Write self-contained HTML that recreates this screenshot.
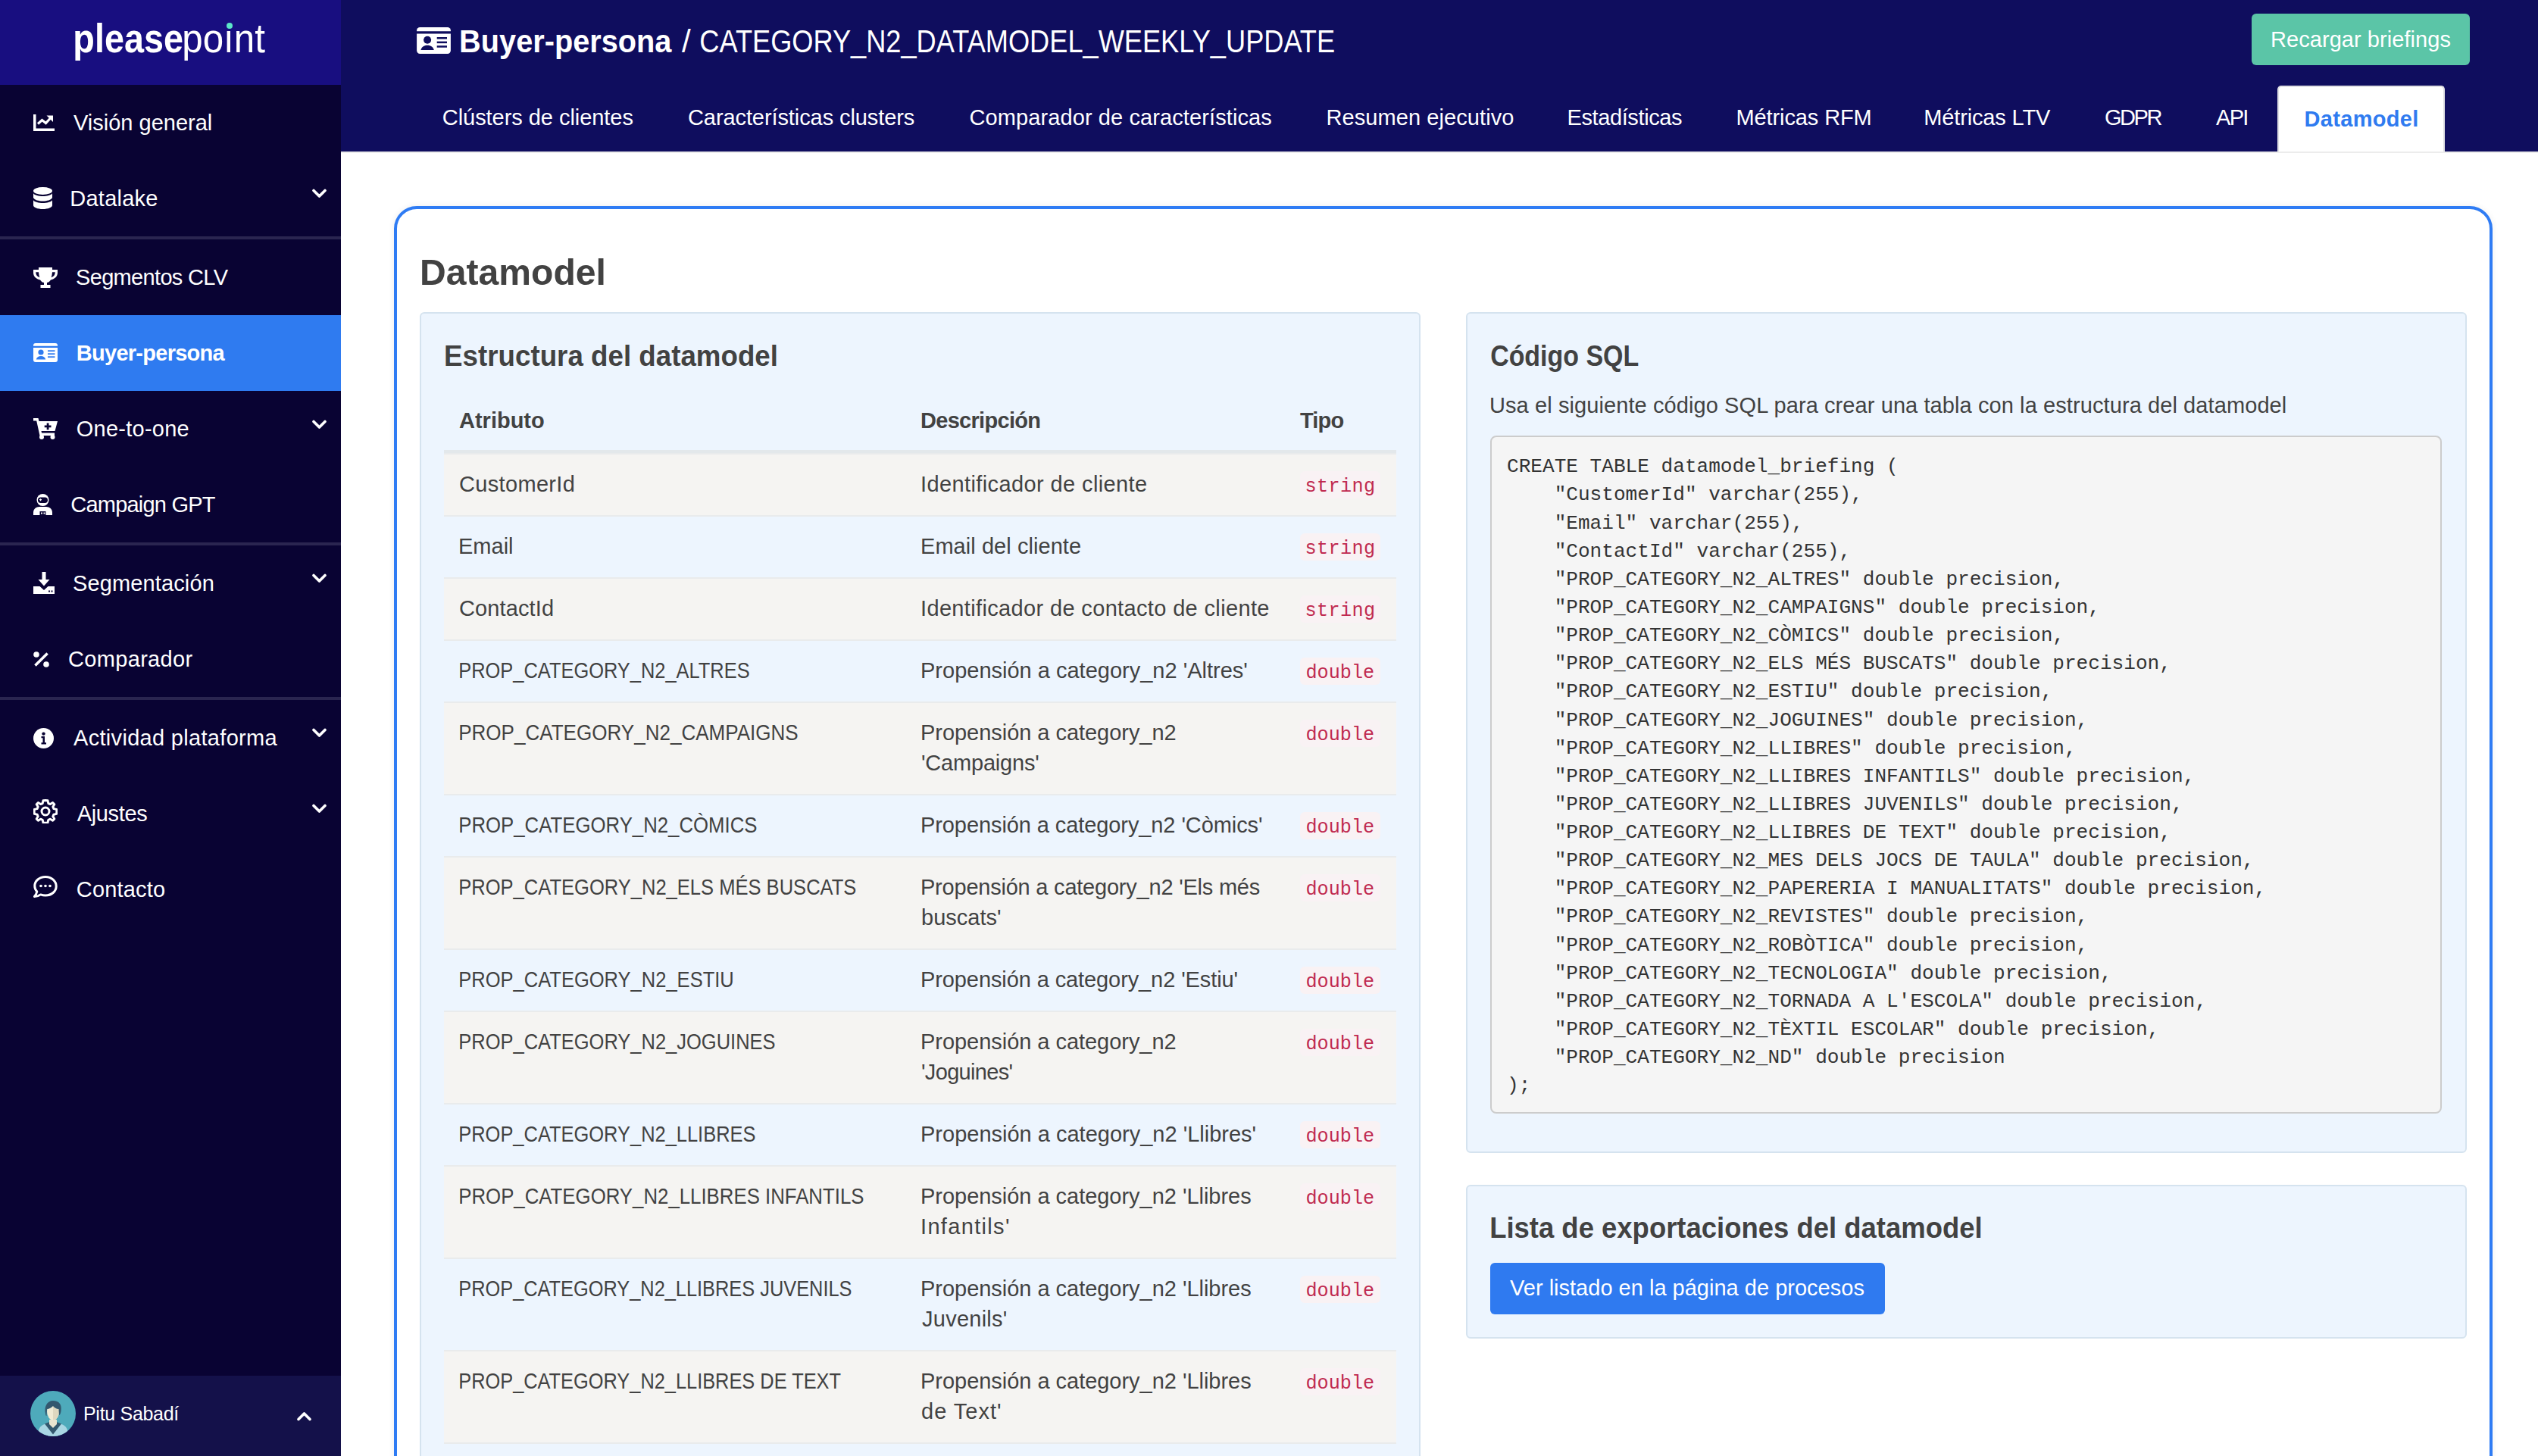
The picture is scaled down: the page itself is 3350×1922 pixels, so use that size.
<!DOCTYPE html>
<html><head><meta charset="utf-8"><title>Datamodel</title>
<style>
html,body{margin:0;padding:0;}
body{width:3350px;height:1922px;overflow:hidden;position:relative;background:#fff;font-family:"Liberation Sans", sans-serif;}
.t{position:absolute;white-space:nowrap;}
.r{position:absolute;box-sizing:content-box;}
</style></head><body>
<div class="r" style="left:0px;top:0px;width:450px;height:1922px;background:#090333;"></div>
<div class="r" style="left:0px;top:0px;width:450px;height:112px;background:#180e80;"></div>
<div class="t" style="left:96.0px;top:21px;font-size:53px;line-height:59px;font-weight:700;color:#fff;font-family:'Liberation Sans', sans-serif;transform:scaleX(0.8820);transform-origin:3.0px 0;">please</div>
<div class="t" style="left:240.0px;top:21px;font-size:53px;line-height:59px;font-weight:400;color:#fff;font-family:'Liberation Sans', sans-serif;transform:scaleX(0.9304);transform-origin:3.0px 0;">poınt</div>
<div class="r" style="left:299px;top:30px;width:8px;height:8px;border-radius:50%;background:#5ce6c8"></div>
<div class="r" style="left:0px;top:312px;width:450px;height:4px;background:#2a2550;"></div>
<div class="r" style="left:0px;top:716px;width:450px;height:4px;background:#2a2550;"></div>
<div class="r" style="left:0px;top:920px;width:450px;height:4px;background:#2a2550;"></div>
<div class="r" style="left:0px;top:416px;width:450px;height:100px;background:#2f7bf0;"></div>
<div class="r" style="left:44px;top:151px;line-height:0"><svg width="28" height="22" viewBox="0 0 28 22"><path d="M0 0h3.5v18.5H28V22H0z" fill="#fff"/><path d="M6 12.5l5.5-5 5 4 6-6.5" stroke="#fff" stroke-width="3.2" fill="none" stroke-linejoin="miter"/><path d="M17.5 1.5H26v8.5z" fill="#fff"/></svg></div>
<div class="t" style="left:97.0px;top:146px;font-size:29px;line-height:32px;font-weight:400;color:#fff;font-family:'Liberation Sans', sans-serif;">Visión general</div>
<div class="r" style="left:44px;top:247px;line-height:0"><svg width="25" height="29" viewBox="0 0 25 29"><ellipse cx="12.5" cy="5" rx="12.5" ry="5" fill="#fff"/><path d="M0 8.2c2 2.6 7 3.8 12.5 3.8S23 10.8 25 8.2V14c-1.5 3-7 4.5-12.5 4.5S1.5 17 0 14z" fill="#fff"/><path d="M0 17.2c2 2.6 7 3.8 12.5 3.8S23 19.8 25 17.2V24c0 2.8-5.6 5-12.5 5S0 26.8 0 24z" fill="#fff"/></svg></div>
<div class="t" style="left:92.3px;top:246px;font-size:29px;line-height:32px;font-weight:400;color:#fff;font-family:'Liberation Sans', sans-serif;letter-spacing:0.24px;">Datalake</div>
<div class="r" style="left:412px;top:249px;line-height:0"><svg width="19" height="13" viewBox="0 0 19 13"><path d="M2 2.5l7.5 7.5 7.5-7.5" stroke="#fff" stroke-width="3.6" fill="none" stroke-linecap="round" stroke-linejoin="round"/></svg></div>
<div class="r" style="left:44px;top:353px;line-height:0"><svg width="32" height="27" viewBox="0 0 32 27"><path d="M7 0h18v3h7v4c0 5-4 8.5-9 9.5-1.2 2-3 3.2-5 3.6V23h4.5v4h-13v-4H14v-2.9c-2-.4-3.8-1.6-5-3.6C4 15.5 0 12 0 7V3h7zM3.3 6.3v.8c0 3 2.2 5.3 5.1 6.2C7.6 11.3 7.2 8.8 7 6.3zm25.4 0h-3.7c-.2 2.5-.6 5-1.4 7 2.9-.9 5.1-3.2 5.1-6.2z" fill="#fff"/></svg></div>
<div class="t" style="left:100.0px;top:350px;font-size:29px;line-height:32px;font-weight:400;color:#fff;font-family:'Liberation Sans', sans-serif;letter-spacing:-0.67px;">Segmentos CLV</div>
<div class="r" style="left:44px;top:453px;line-height:0"><svg width="32" height="25" viewBox="0 0 32 25"><path d="M3 0h26a3 3 0 0 1 3 3v.8H0V3a3 3 0 0 1 3-3z" fill="#fff"/><path d="M0 6h32v16a3 3 0 0 1-3 3H3a3 3 0 0 1-3-3z" fill="#fff"/><circle cx="10" cy="12" r="3.6" fill="#2f7bf0"/><path d="M3.8 21.5c.6-2.8 3-4.5 6.2-4.5s5.6 1.7 6.2 4.5z" fill="#2f7bf0"/><rect x="19" y="9.3" width="9.5" height="1.8" fill="#2f7bf0"/><rect x="19" y="13.3" width="9.5" height="1.8" fill="#2f7bf0"/><rect x="19" y="17.3" width="9.5" height="1.8" fill="#2f7bf0"/></svg></div>
<div class="t" style="left:100.8px;top:450px;font-size:29px;line-height:32px;font-weight:700;color:#fff;font-family:'Liberation Sans', sans-serif;letter-spacing:-0.73px;">Buyer-persona</div>
<div class="r" style="left:44px;top:552px;line-height:0"><svg width="32" height="28" viewBox="0 0 32 28"><path d="M0 0h6.5l1 4H32l-3.5 13H10.5l.6 2.5H28V23H8.5L4.2 3.5H0z" fill="#fff"/><circle cx="11" cy="25" r="3" fill="#fff"/><circle cx="25.5" cy="25" r="3" fill="#fff"/><path d="M17.7 6.5h2.8v3h3v2.8h-3v3h-2.8v-3h-3V9.5h3z" fill="#090333"/></svg></div>
<div class="t" style="left:100.8px;top:550px;font-size:29px;line-height:32px;font-weight:400;color:#fff;font-family:'Liberation Sans', sans-serif;letter-spacing:0.24px;">One-to-one</div>
<div class="r" style="left:412px;top:554px;line-height:0"><svg width="19" height="13" viewBox="0 0 19 13"><path d="M2 2.5l7.5 7.5 7.5-7.5" stroke="#fff" stroke-width="3.6" fill="none" stroke-linecap="round" stroke-linejoin="round"/></svg></div>
<div class="r" style="left:44px;top:652px;line-height:0"><svg width="25" height="28" viewBox="0 0 25 28"><circle cx="12.5" cy="8" r="8" fill="#fff"/><rect x="6" y="4.5" width="13" height="7.5" rx="3.7" fill="#090333"/><path d="M9.5 6.2v3M8 7.7h3" stroke="#fff" stroke-width="1.2"/><path d="M0 28v-3.5C0 20 3.5 17 8 17h9c4.5 0 8 3 8 7.5V28z" fill="#fff"/><rect x="8.5" y="23" width="8" height="5" fill="#090333"/><rect x="10" y="24.5" width="2" height="2" fill="#fff"/><rect x="13.5" y="24.5" width="2" height="2" fill="#fff"/></svg></div>
<div class="t" style="left:93.3px;top:650px;font-size:29px;line-height:32px;font-weight:400;color:#fff;font-family:'Liberation Sans', sans-serif;letter-spacing:-0.79px;">Campaign GPT</div>
<div class="r" style="left:44px;top:755px;line-height:0"><svg width="28" height="29" viewBox="0 0 28 29"><path d="M11.5 0h5v10h5L14 18.5 6.5 10h5z" fill="#fff"/><path d="M0 19h8.5l5.5 5 5.5-5H28v10H0z" fill="#fff"/><rect x="20" y="24.5" width="2" height="2" fill="#090333"/><rect x="23.5" y="24.5" width="2" height="2" fill="#090333"/></svg></div>
<div class="t" style="left:96.0px;top:754px;font-size:29px;line-height:32px;font-weight:400;color:#fff;font-family:'Liberation Sans', sans-serif;letter-spacing:0.13px;">Segmentación</div>
<div class="r" style="left:412px;top:757px;line-height:0"><svg width="19" height="13" viewBox="0 0 19 13"><path d="M2 2.5l7.5 7.5 7.5-7.5" stroke="#fff" stroke-width="3.6" fill="none" stroke-linecap="round" stroke-linejoin="round"/></svg></div>
<div class="r" style="left:44px;top:860px;line-height:0"><svg width="21" height="21" viewBox="0 0 21 21"><circle cx="4" cy="4" r="3.8" fill="#fff"/><circle cx="17" cy="17" r="3.8" fill="#fff"/><path d="M1.2 17.3L17.3 1.2l2.5 2.5L3.7 19.8z" fill="#fff"/></svg></div>
<div class="t" style="left:90.0px;top:854px;font-size:29px;line-height:32px;font-weight:400;color:#fff;font-family:'Liberation Sans', sans-serif;letter-spacing:0.33px;">Comparador</div>
<div class="r" style="left:44px;top:961px;line-height:0"><svg width="27" height="27" viewBox="0 0 27 27"><circle cx="13.5" cy="13.5" r="13.5" fill="#fff"/><circle cx="13.5" cy="7.6" r="2.2" fill="#090333"/><path d="M10.5 11h4.5v8.3h2v2.2h-6.5v-2.2h2v-6h-2z" fill="#090333"/></svg></div>
<div class="t" style="left:97.0px;top:958px;font-size:29px;line-height:32px;font-weight:400;color:#fff;font-family:'Liberation Sans', sans-serif;letter-spacing:0.31px;">Actividad plataforma</div>
<div class="r" style="left:412px;top:961px;line-height:0"><svg width="19" height="13" viewBox="0 0 19 13"><path d="M2 2.5l7.5 7.5 7.5-7.5" stroke="#fff" stroke-width="3.6" fill="none" stroke-linecap="round" stroke-linejoin="round"/></svg></div>
<div class="r" style="left:44px;top:1055px;line-height:0"><svg width="32" height="32" viewBox="0 0 32 32"><path d="M16 1.5l3 .3.8 3.7 2.6 1.1 3.2-2 2.2 2.2-2 3.2 1.1 2.6 3.7.8.3 3-.3 3-3.7.8-1.1 2.6 2 3.2-2.2 2.2-3.2-2-2.6 1.1-.8 3.7-3 .3-3-.3-.8-3.7-2.6-1.1-3.2 2-2.2-2.2 2-3.2-1.1-2.6-3.7-.8-.3-3 .3-3 3.7-.8 1.1-2.6-2-3.2 2.2-2.2 3.2 2 2.6-1.1.8-3.7z" fill="none" stroke="#fff" stroke-width="3" stroke-linejoin="round"/><circle cx="16" cy="16" r="5" fill="none" stroke="#fff" stroke-width="3"/></svg></div>
<div class="t" style="left:101.8px;top:1058px;font-size:29px;line-height:32px;font-weight:400;color:#fff;font-family:'Liberation Sans', sans-serif;letter-spacing:-0.37px;">Ajustes</div>
<div class="r" style="left:412px;top:1061px;line-height:0"><svg width="19" height="13" viewBox="0 0 19 13"><path d="M2 2.5l7.5 7.5 7.5-7.5" stroke="#fff" stroke-width="3.6" fill="none" stroke-linecap="round" stroke-linejoin="round"/></svg></div>
<div class="r" style="left:44px;top:1155px;line-height:0"><svg width="32" height="32" viewBox="0 0 32 32"><path d="M16 2.5C8 2.5 1.8 7.8 1.8 14.5c0 2.8 1.1 5.4 3 7.5-.6 2.5-2 4.8-3.3 6.5 3.3 0 6.2-1.2 8.1-2.6 2 .7 4.2 1.1 6.4 1.1 8 0 14.2-5.3 14.2-12S24 2.5 16 2.5z" fill="none" stroke="#fff" stroke-width="3" stroke-linejoin="round"/><circle cx="10" cy="14.5" r="1.8" fill="#fff"/><circle cx="16" cy="14.5" r="1.8" fill="#fff"/><circle cx="22" cy="14.5" r="1.8" fill="#fff"/></svg></div>
<div class="t" style="left:100.8px;top:1158px;font-size:29px;line-height:32px;font-weight:400;color:#fff;font-family:'Liberation Sans', sans-serif;letter-spacing:0.17px;">Contacto</div>
<div class="r" style="left:0px;top:1816px;width:450px;height:106px;background:#14114a;"></div>
<div class="r" style="left:40px;top:1836px;line-height:0"><svg width="60" height="60" viewBox="0 0 60 60"><defs><clipPath id="cc"><circle cx="30" cy="30" r="30"/></clipPath></defs><circle cx="30" cy="30" r="30" fill="#4eaabb"/><g clip-path="url(#cc)"><path d="M10 60c0-10 3-14 9-16l11-3 11 3c6 2 9 6 9 16z" fill="#a9d6e3"/><path d="M19 43.5l11 14 11-14-5-2H24z" fill="#33586e"/><path d="M25 38h10v6l-5 5-5-5z" fill="#e9e4cf"/><ellipse cx="30" cy="27" rx="8" ry="11.5" fill="#efebd5"/><path d="M30 15.5c4.5 0 8 4 8 11.5s-3.5 11.5-8 11.5z" fill="#ddd8c0"/><path d="M20 30c-2-9 2-17 10-17s12 5 10.5 14c-.5 3-1.5 5-2.5 5l-.5-8c-3 0-6-2-7.5-4-2 2-5 4-8 4l-.5 9c-1 0-1.3-1-1.5-3z" fill="#33586e"/></g></svg></div>
<div class="t" style="left:110.0px;top:1852px;font-size:25px;line-height:28px;font-weight:400;color:#fff;font-family:'Liberation Sans', sans-serif;letter-spacing:-0.30px;">Pitu Sabadí</div>
<div class="r" style="left:392px;top:1863px;line-height:0"><svg width="19" height="13" viewBox="0 0 19 13"><path d="M2 10.5l7.5-7.5 7.5 7.5" stroke="#fff" stroke-width="3.6" fill="none" stroke-linecap="round" stroke-linejoin="round"/></svg></div>
<div class="r" style="left:450px;top:0px;width:2900px;height:200px;background:#0f0d5e;"></div>
<div class="r" style="left:550px;top:36px;line-height:0"><svg width="45" height="35" viewBox="0 0 32 25"><path d="M3 0h26a3 3 0 0 1 3 3v.8H0V3a3 3 0 0 1 3-3z" fill="#fff"/><path d="M0 6h32v16a3 3 0 0 1-3 3H3a3 3 0 0 1-3-3z" fill="#fff"/><circle cx="10" cy="12" r="3.6" fill="#0f0d5e"/><path d="M3.8 21.5c.6-2.8 3-4.5 6.2-4.5s5.6 1.7 6.2 4.5z" fill="#0f0d5e"/><rect x="19" y="9.3" width="9.5" height="1.8" fill="#0f0d5e"/><rect x="19" y="13.3" width="9.5" height="1.8" fill="#0f0d5e"/><rect x="19" y="17.3" width="9.5" height="1.8" fill="#0f0d5e"/></svg></div>
<div class="t" style="left:606.0px;top:31px;font-size:42px;line-height:47px;font-weight:700;color:#fff;font-family:'Liberation Sans', sans-serif;transform:scaleX(0.9458);transform-origin:2.0px 0;">Buyer-persona</div>
<div class="t" style="left:900.0px;top:31px;font-size:42px;line-height:47px;font-weight:400;color:#fff;font-family:'Liberation Sans', sans-serif;">/</div>
<div class="t" style="left:923.0px;top:31px;font-size:42px;line-height:47px;font-weight:400;color:#fff;font-family:'Liberation Sans', sans-serif;transform:scaleX(0.8619);transform-origin:2.0px 0;">CATEGORY_N2_DATAMODEL_WEEKLY_UPDATE</div>
<div class="r" style="left:2972px;top:18px;width:288px;height:68px;background:#5bc5a7;border-radius:6px"></div>
<div class="t" style="left:2997.0px;top:36px;font-size:29px;line-height:32px;font-weight:400;color:#fff;font-family:'Liberation Sans', sans-serif;letter-spacing:0.06px;">Recargar briefings</div>
<div class="t" style="left:583.8px;top:139px;font-size:29px;line-height:32px;font-weight:400;color:#fff;font-family:'Liberation Sans', sans-serif;letter-spacing:-0.05px;">Clústers de clientes</div>
<div class="t" style="left:908.0px;top:139px;font-size:29px;line-height:32px;font-weight:400;color:#fff;font-family:'Liberation Sans', sans-serif;letter-spacing:-0.09px;">Características clusters</div>
<div class="t" style="left:1279.5px;top:139px;font-size:29px;line-height:32px;font-weight:400;color:#fff;font-family:'Liberation Sans', sans-serif;letter-spacing:0.10px;">Comparador de características</div>
<div class="t" style="left:1750.5px;top:139px;font-size:29px;line-height:32px;font-weight:400;color:#fff;font-family:'Liberation Sans', sans-serif;letter-spacing:0.08px;">Resumen ejecutivo</div>
<div class="t" style="left:2068.5px;top:139px;font-size:29px;line-height:32px;font-weight:400;color:#fff;font-family:'Liberation Sans', sans-serif;letter-spacing:-0.39px;">Estadísticas</div>
<div class="t" style="left:2291.5px;top:139px;font-size:29px;line-height:32px;font-weight:400;color:#fff;font-family:'Liberation Sans', sans-serif;letter-spacing:-0.11px;">Métricas RFM</div>
<div class="t" style="left:2539.3px;top:139px;font-size:29px;line-height:32px;font-weight:400;color:#fff;font-family:'Liberation Sans', sans-serif;letter-spacing:-0.15px;">Métricas LTV</div>
<div class="t" style="left:2777.9px;top:139px;font-size:29px;line-height:32px;font-weight:400;color:#fff;font-family:'Liberation Sans', sans-serif;letter-spacing:-2.43px;">GDPR</div>
<div class="t" style="left:2925.0px;top:139px;font-size:29px;line-height:32px;font-weight:400;color:#fff;font-family:'Liberation Sans', sans-serif;letter-spacing:-1.70px;">API</div>
<div class="r" style="left:3006px;top:113px;width:217px;height:87px;background:#fff;border:2px solid #e0e0e4;border-bottom:none;border-radius:5px 5px 0 0"></div>
<div class="r" style="left:450px;top:200px;width:2900px;height:2px;background:#ececec;"></div>
<div class="t" style="left:3041.6px;top:141px;font-size:29px;line-height:32px;font-weight:700;color:#2f7bf0;font-family:'Liberation Sans', sans-serif;letter-spacing:0.30px;">Datamodel</div>
<div class="r" style="left:520px;top:272px;width:2762px;height:1800px;border:4px solid #2f7cf4;border-radius:30px;background:#fff;box-shadow:0 0 8px rgba(0,0,0,0.07)"></div>
<div class="t" style="left:553.5px;top:332px;font-size:49px;line-height:54px;font-weight:700;color:#424242;font-family:'Liberation Sans', sans-serif;transform:scaleX(0.9816);transform-origin:3.0px 0;">Datamodel</div>
<div class="r" style="left:554px;top:412px;width:1317px;height:1596px;background:#edf5fe;border:2px solid #d5e3ef;border-radius:6px"></div>
<div class="t" style="left:586.0px;top:448px;font-size:39px;line-height:43px;font-weight:700;color:#424242;font-family:'Liberation Sans', sans-serif;transform:scaleX(0.9418);transform-origin:2.0px 0;">Estructura del datamodel</div>
<div class="t" style="left:606.0px;top:539px;font-size:29px;line-height:32px;font-weight:700;color:#424242;font-family:'Liberation Sans', sans-serif;">Atributo</div>
<div class="t" style="left:1215.0px;top:539px;font-size:29px;line-height:32px;font-weight:700;color:#424242;font-family:'Liberation Sans', sans-serif;letter-spacing:-0.70px;">Descripción</div>
<div class="t" style="left:1716.0px;top:539px;font-size:29px;line-height:32px;font-weight:700;color:#424242;font-family:'Liberation Sans', sans-serif;letter-spacing:-0.83px;">Tipo</div>
<div class="r" style="left:586px;top:594px;width:1257px;height:4px;background:#e3e8eb;"></div>
<div class="r" style="left:586px;top:598px;width:1257px;height:2px;background:#e9ebec;"></div>
<div class="r" style="left:586px;top:600px;width:1257px;height:80px;background:#f5f4f2;"></div>
<div class="t" style="left:606.0px;top:623px;font-size:29px;line-height:32px;font-weight:400;color:#424242;font-family:'Liberation Sans', sans-serif;letter-spacing:0.33px;">CustomerId</div>
<div class="t" style="left:1215.0px;top:623px;font-size:29px;line-height:32px;font-weight:400;color:#424242;font-family:'Liberation Sans', sans-serif;letter-spacing:0.39px;">Identificador de cliente</div>
<div class="r" style="left:1716px;top:622px;width:106px;height:36px;background:#f9f2f4;border-radius:6px"></div>
<div class="t" style="left:1722.5px;top:628px;font-size:25.2px;line-height:29px;font-weight:400;color:#c02a50;font-family:'Liberation Mono', monospace;letter-spacing:0.40px;">string</div>
<div class="r" style="left:586px;top:680px;width:1257px;height:2px;background:#e9ebec;"></div>
<div class="r" style="left:586px;top:682px;width:1257px;height:80px;background:#edf5fe;"></div>
<div class="t" style="left:605.0px;top:705px;font-size:29px;line-height:32px;font-weight:400;color:#424242;font-family:'Liberation Sans', sans-serif;">Email</div>
<div class="t" style="left:1215.0px;top:705px;font-size:29px;line-height:32px;font-weight:400;color:#424242;font-family:'Liberation Sans', sans-serif;letter-spacing:0.06px;">Email del cliente</div>
<div class="r" style="left:1716px;top:704px;width:106px;height:36px;background:#f9f2f4;border-radius:6px"></div>
<div class="t" style="left:1722.5px;top:710px;font-size:25.2px;line-height:29px;font-weight:400;color:#c02a50;font-family:'Liberation Mono', monospace;letter-spacing:0.40px;">string</div>
<div class="r" style="left:586px;top:762px;width:1257px;height:2px;background:#e9ebec;"></div>
<div class="r" style="left:586px;top:764px;width:1257px;height:80px;background:#f5f4f2;"></div>
<div class="t" style="left:606.0px;top:787px;font-size:29px;line-height:32px;font-weight:400;color:#424242;font-family:'Liberation Sans', sans-serif;letter-spacing:0.12px;">ContactId</div>
<div class="t" style="left:1215.0px;top:787px;font-size:29px;line-height:32px;font-weight:400;color:#424242;font-family:'Liberation Sans', sans-serif;letter-spacing:0.35px;">Identificador de contacto de cliente</div>
<div class="r" style="left:1716px;top:786px;width:106px;height:36px;background:#f9f2f4;border-radius:6px"></div>
<div class="t" style="left:1722.5px;top:792px;font-size:25.2px;line-height:29px;font-weight:400;color:#c02a50;font-family:'Liberation Mono', monospace;letter-spacing:0.40px;">string</div>
<div class="r" style="left:586px;top:844px;width:1257px;height:2px;background:#e9ebec;"></div>
<div class="r" style="left:586px;top:846px;width:1257px;height:80px;background:#edf5fe;"></div>
<div class="t" style="left:605.0px;top:869px;font-size:29px;line-height:32px;font-weight:400;color:#424242;font-family:'Liberation Sans', sans-serif;transform:scaleX(0.8768);transform-origin:2.0px 0;">PROP_CATEGORY_N2_ALTRES</div>
<div class="t" style="left:1215.0px;top:869px;font-size:29px;line-height:32px;font-weight:400;color:#424242;font-family:'Liberation Sans', sans-serif;">Propensión a category_n2 'Altres'</div>
<div class="r" style="left:1716px;top:868px;width:106px;height:36px;background:#f9f2f4;border-radius:6px"></div>
<div class="t" style="left:1723.5px;top:874px;font-size:25.2px;line-height:29px;font-weight:400;color:#c02a50;font-family:'Liberation Mono', monospace;">double</div>
<div class="r" style="left:586px;top:926px;width:1257px;height:2px;background:#e9ebec;"></div>
<div class="r" style="left:586px;top:928px;width:1257px;height:120px;background:#f5f4f2;"></div>
<div class="t" style="left:605.0px;top:951px;font-size:29px;line-height:32px;font-weight:400;color:#424242;font-family:'Liberation Sans', sans-serif;transform:scaleX(0.8978);transform-origin:2.0px 0;">PROP_CATEGORY_N2_CAMPAIGNS</div>
<div class="t" style="left:1215.0px;top:951px;font-size:29px;line-height:32px;font-weight:400;color:#424242;font-family:'Liberation Sans', sans-serif;letter-spacing:-0.04px;">Propensión a category_n2</div>
<div class="t" style="left:1216.0px;top:991px;font-size:29px;line-height:32px;font-weight:400;color:#424242;font-family:'Liberation Sans', sans-serif;letter-spacing:-0.20px;">'Campaigns'</div>
<div class="r" style="left:1716px;top:950px;width:106px;height:36px;background:#f9f2f4;border-radius:6px"></div>
<div class="t" style="left:1723.5px;top:956px;font-size:25.2px;line-height:29px;font-weight:400;color:#c02a50;font-family:'Liberation Mono', monospace;">double</div>
<div class="r" style="left:586px;top:1048px;width:1257px;height:2px;background:#e9ebec;"></div>
<div class="r" style="left:586px;top:1050px;width:1257px;height:80px;background:#edf5fe;"></div>
<div class="t" style="left:605.0px;top:1073px;font-size:29px;line-height:32px;font-weight:400;color:#424242;font-family:'Liberation Sans', sans-serif;transform:scaleX(0.8886);transform-origin:2.0px 0;">PROP_CATEGORY_N2_CÒMICS</div>
<div class="t" style="left:1215.0px;top:1073px;font-size:29px;line-height:32px;font-weight:400;color:#424242;font-family:'Liberation Sans', sans-serif;letter-spacing:-0.09px;">Propensión a category_n2 'Còmics'</div>
<div class="r" style="left:1716px;top:1072px;width:106px;height:36px;background:#f9f2f4;border-radius:6px"></div>
<div class="t" style="left:1723.5px;top:1078px;font-size:25.2px;line-height:29px;font-weight:400;color:#c02a50;font-family:'Liberation Mono', monospace;">double</div>
<div class="r" style="left:586px;top:1130px;width:1257px;height:2px;background:#e9ebec;"></div>
<div class="r" style="left:586px;top:1132px;width:1257px;height:120px;background:#f5f4f2;"></div>
<div class="t" style="left:605.0px;top:1155px;font-size:29px;line-height:32px;font-weight:400;color:#424242;font-family:'Liberation Sans', sans-serif;transform:scaleX(0.8806);transform-origin:2.0px 0;">PROP_CATEGORY_N2_ELS MÉS BUSCATS</div>
<div class="t" style="left:1215.0px;top:1155px;font-size:29px;line-height:32px;font-weight:400;color:#424242;font-family:'Liberation Sans', sans-serif;letter-spacing:-0.22px;">Propensión a category_n2 'Els més</div>
<div class="t" style="left:1216.0px;top:1195px;font-size:29px;line-height:32px;font-weight:400;color:#424242;font-family:'Liberation Sans', sans-serif;">buscats'</div>
<div class="r" style="left:1716px;top:1154px;width:106px;height:36px;background:#f9f2f4;border-radius:6px"></div>
<div class="t" style="left:1723.5px;top:1160px;font-size:25.2px;line-height:29px;font-weight:400;color:#c02a50;font-family:'Liberation Mono', monospace;">double</div>
<div class="r" style="left:586px;top:1252px;width:1257px;height:2px;background:#e9ebec;"></div>
<div class="r" style="left:586px;top:1254px;width:1257px;height:80px;background:#edf5fe;"></div>
<div class="t" style="left:605.0px;top:1277px;font-size:29px;line-height:32px;font-weight:400;color:#424242;font-family:'Liberation Sans', sans-serif;transform:scaleX(0.8800);transform-origin:2.0px 0;">PROP_CATEGORY_N2_ESTIU</div>
<div class="t" style="left:1215.0px;top:1277px;font-size:29px;line-height:32px;font-weight:400;color:#424242;font-family:'Liberation Sans', sans-serif;letter-spacing:-0.10px;">Propensión a category_n2 'Estiu'</div>
<div class="r" style="left:1716px;top:1276px;width:106px;height:36px;background:#f9f2f4;border-radius:6px"></div>
<div class="t" style="left:1723.5px;top:1282px;font-size:25.2px;line-height:29px;font-weight:400;color:#c02a50;font-family:'Liberation Mono', monospace;">double</div>
<div class="r" style="left:586px;top:1334px;width:1257px;height:2px;background:#e9ebec;"></div>
<div class="r" style="left:586px;top:1336px;width:1257px;height:120px;background:#f5f4f2;"></div>
<div class="t" style="left:605.0px;top:1359px;font-size:29px;line-height:32px;font-weight:400;color:#424242;font-family:'Liberation Sans', sans-serif;transform:scaleX(0.8789);transform-origin:2.0px 0;">PROP_CATEGORY_N2_JOGUINES</div>
<div class="t" style="left:1215.0px;top:1359px;font-size:29px;line-height:32px;font-weight:400;color:#424242;font-family:'Liberation Sans', sans-serif;letter-spacing:-0.04px;">Propensión a category_n2</div>
<div class="t" style="left:1216.0px;top:1399px;font-size:29px;line-height:32px;font-weight:400;color:#424242;font-family:'Liberation Sans', sans-serif;letter-spacing:-0.67px;">'Joguines'</div>
<div class="r" style="left:1716px;top:1358px;width:106px;height:36px;background:#f9f2f4;border-radius:6px"></div>
<div class="t" style="left:1723.5px;top:1364px;font-size:25.2px;line-height:29px;font-weight:400;color:#c02a50;font-family:'Liberation Mono', monospace;">double</div>
<div class="r" style="left:586px;top:1456px;width:1257px;height:2px;background:#e9ebec;"></div>
<div class="r" style="left:586px;top:1458px;width:1257px;height:80px;background:#edf5fe;"></div>
<div class="t" style="left:605.0px;top:1481px;font-size:29px;line-height:32px;font-weight:400;color:#424242;font-family:'Liberation Sans', sans-serif;transform:scaleX(0.8775);transform-origin:2.0px 0;">PROP_CATEGORY_N2_LLIBRES</div>
<div class="t" style="left:1215.0px;top:1481px;font-size:29px;line-height:32px;font-weight:400;color:#424242;font-family:'Liberation Sans', sans-serif;">Propensión a category_n2 'Llibres'</div>
<div class="r" style="left:1716px;top:1480px;width:106px;height:36px;background:#f9f2f4;border-radius:6px"></div>
<div class="t" style="left:1723.5px;top:1486px;font-size:25.2px;line-height:29px;font-weight:400;color:#c02a50;font-family:'Liberation Mono', monospace;">double</div>
<div class="r" style="left:586px;top:1538px;width:1257px;height:2px;background:#e9ebec;"></div>
<div class="r" style="left:586px;top:1540px;width:1257px;height:120px;background:#f5f4f2;"></div>
<div class="t" style="left:605.0px;top:1563px;font-size:29px;line-height:32px;font-weight:400;color:#424242;font-family:'Liberation Sans', sans-serif;transform:scaleX(0.8896);transform-origin:2.0px 0;">PROP_CATEGORY_N2_LLIBRES INFANTILS</div>
<div class="t" style="left:1215.0px;top:1563px;font-size:29px;line-height:32px;font-weight:400;color:#424242;font-family:'Liberation Sans', sans-serif;letter-spacing:-0.03px;">Propensión a category_n2 'Llibres</div>
<div class="t" style="left:1215.0px;top:1603px;font-size:29px;line-height:32px;font-weight:400;color:#424242;font-family:'Liberation Sans', sans-serif;letter-spacing:1.33px;">Infantils'</div>
<div class="r" style="left:1716px;top:1562px;width:106px;height:36px;background:#f9f2f4;border-radius:6px"></div>
<div class="t" style="left:1723.5px;top:1568px;font-size:25.2px;line-height:29px;font-weight:400;color:#c02a50;font-family:'Liberation Mono', monospace;">double</div>
<div class="r" style="left:586px;top:1660px;width:1257px;height:2px;background:#e9ebec;"></div>
<div class="r" style="left:586px;top:1662px;width:1257px;height:120px;background:#edf5fe;"></div>
<div class="t" style="left:605.0px;top:1685px;font-size:29px;line-height:32px;font-weight:400;color:#424242;font-family:'Liberation Sans', sans-serif;transform:scaleX(0.8746);transform-origin:2.0px 0;">PROP_CATEGORY_N2_LLIBRES JUVENILS</div>
<div class="t" style="left:1215.0px;top:1685px;font-size:29px;line-height:32px;font-weight:400;color:#424242;font-family:'Liberation Sans', sans-serif;letter-spacing:-0.03px;">Propensión a category_n2 'Llibres</div>
<div class="t" style="left:1217.0px;top:1725px;font-size:29px;line-height:32px;font-weight:400;color:#424242;font-family:'Liberation Sans', sans-serif;letter-spacing:0.25px;">Juvenils'</div>
<div class="r" style="left:1716px;top:1684px;width:106px;height:36px;background:#f9f2f4;border-radius:6px"></div>
<div class="t" style="left:1723.5px;top:1690px;font-size:25.2px;line-height:29px;font-weight:400;color:#c02a50;font-family:'Liberation Mono', monospace;">double</div>
<div class="r" style="left:586px;top:1782px;width:1257px;height:2px;background:#e9ebec;"></div>
<div class="r" style="left:586px;top:1784px;width:1257px;height:120px;background:#f5f4f2;"></div>
<div class="t" style="left:605.0px;top:1807px;font-size:29px;line-height:32px;font-weight:400;color:#424242;font-family:'Liberation Sans', sans-serif;transform:scaleX(0.8748);transform-origin:2.0px 0;">PROP_CATEGORY_N2_LLIBRES DE TEXT</div>
<div class="t" style="left:1215.0px;top:1807px;font-size:29px;line-height:32px;font-weight:400;color:#424242;font-family:'Liberation Sans', sans-serif;letter-spacing:-0.03px;">Propensión a category_n2 'Llibres</div>
<div class="t" style="left:1216.0px;top:1847px;font-size:29px;line-height:32px;font-weight:400;color:#424242;font-family:'Liberation Sans', sans-serif;letter-spacing:1.00px;">de Text'</div>
<div class="r" style="left:1716px;top:1806px;width:106px;height:36px;background:#f9f2f4;border-radius:6px"></div>
<div class="t" style="left:1723.5px;top:1812px;font-size:25.2px;line-height:29px;font-weight:400;color:#c02a50;font-family:'Liberation Mono', monospace;">double</div>
<div class="r" style="left:586px;top:1904px;width:1257px;height:2px;background:#e9ebec;"></div>
<div class="r" style="left:586px;top:1906px;width:1257px;height:120px;background:#edf5fe;"></div>
<div class="t" style="left:605.0px;top:1929px;font-size:29px;line-height:32px;font-weight:400;color:#424242;font-family:'Liberation Sans', sans-serif;transform:scaleX(0.8399);transform-origin:2.0px 0;">PROP_CATEGORY_N2_MES DELS JOCS DE TAULA</div>
<div class="t" style="left:1215.0px;top:1929px;font-size:29px;line-height:32px;font-weight:400;color:#424242;font-family:'Liberation Sans', sans-serif;letter-spacing:-0.97px;">Propensión a category_n2 'Mes dels</div>
<div class="t" style="left:1217.0px;top:1969px;font-size:29px;line-height:32px;font-weight:400;color:#424242;font-family:'Liberation Sans', sans-serif;letter-spacing:1.08px;">jocs de taula'</div>
<div class="r" style="left:1716px;top:1928px;width:106px;height:36px;background:#f9f2f4;border-radius:6px"></div>
<div class="t" style="left:1723.5px;top:1934px;font-size:25.2px;line-height:29px;font-weight:400;color:#c02a50;font-family:'Liberation Mono', monospace;">double</div>
<div class="r" style="left:1935px;top:412px;width:1317px;height:1106px;background:#edf5fe;border:2px solid #d5e3ef;border-radius:6px"></div>
<div class="t" style="left:1967.0px;top:448px;font-size:39px;line-height:43px;font-weight:700;color:#424242;font-family:'Liberation Sans', sans-serif;transform:scaleX(0.8700);transform-origin:1.0px 0;">Código SQL</div>
<div class="t" style="left:1966.0px;top:519px;font-size:29px;line-height:32px;font-weight:400;color:#424242;font-family:'Liberation Sans', sans-serif;letter-spacing:0.09px;">Usa el siguiente código SQL para crear una tabla con la estructura del datamodel</div>
<div class="r" style="left:1967px;top:575px;width:1252px;height:891px;background:#f5f5f5;border:2px solid #cccccc;border-radius:8px"></div>
<div class="t" style="left:1989.0px;top:601.2px;font-size:26.1px;line-height:30px;font-weight:400;color:#333333;font-family:'Liberation Mono', monospace;">CREATE&nbsp;TABLE&nbsp;datamodel_briefing&nbsp;(</div>
<div class="t" style="left:1989.0px;top:638.3px;font-size:26.1px;line-height:30px;font-weight:400;color:#333333;font-family:'Liberation Mono', monospace;">&nbsp;&nbsp;&nbsp;&nbsp;"CustomerId"&nbsp;varchar(255),</div>
<div class="t" style="left:1989.0px;top:675.5px;font-size:26.1px;line-height:30px;font-weight:400;color:#333333;font-family:'Liberation Mono', monospace;">&nbsp;&nbsp;&nbsp;&nbsp;"Email"&nbsp;varchar(255),</div>
<div class="t" style="left:1989.0px;top:712.6px;font-size:26.1px;line-height:30px;font-weight:400;color:#333333;font-family:'Liberation Mono', monospace;">&nbsp;&nbsp;&nbsp;&nbsp;"ContactId"&nbsp;varchar(255),</div>
<div class="t" style="left:1989.0px;top:749.8px;font-size:26.1px;line-height:30px;font-weight:400;color:#333333;font-family:'Liberation Mono', monospace;">&nbsp;&nbsp;&nbsp;&nbsp;"PROP_CATEGORY_N2_ALTRES"&nbsp;double&nbsp;precision,</div>
<div class="t" style="left:1989.0px;top:786.9px;font-size:26.1px;line-height:30px;font-weight:400;color:#333333;font-family:'Liberation Mono', monospace;">&nbsp;&nbsp;&nbsp;&nbsp;"PROP_CATEGORY_N2_CAMPAIGNS"&nbsp;double&nbsp;precision,</div>
<div class="t" style="left:1989.0px;top:824.0px;font-size:26.1px;line-height:30px;font-weight:400;color:#333333;font-family:'Liberation Mono', monospace;">&nbsp;&nbsp;&nbsp;&nbsp;"PROP_CATEGORY_N2_CÒMICS"&nbsp;double&nbsp;precision,</div>
<div class="t" style="left:1989.0px;top:861.2px;font-size:26.1px;line-height:30px;font-weight:400;color:#333333;font-family:'Liberation Mono', monospace;">&nbsp;&nbsp;&nbsp;&nbsp;"PROP_CATEGORY_N2_ELS&nbsp;MÉS&nbsp;BUSCATS"&nbsp;double&nbsp;precision,</div>
<div class="t" style="left:1989.0px;top:898.3px;font-size:26.1px;line-height:30px;font-weight:400;color:#333333;font-family:'Liberation Mono', monospace;">&nbsp;&nbsp;&nbsp;&nbsp;"PROP_CATEGORY_N2_ESTIU"&nbsp;double&nbsp;precision,</div>
<div class="t" style="left:1989.0px;top:935.5px;font-size:26.1px;line-height:30px;font-weight:400;color:#333333;font-family:'Liberation Mono', monospace;">&nbsp;&nbsp;&nbsp;&nbsp;"PROP_CATEGORY_N2_JOGUINES"&nbsp;double&nbsp;precision,</div>
<div class="t" style="left:1989.0px;top:972.6px;font-size:26.1px;line-height:30px;font-weight:400;color:#333333;font-family:'Liberation Mono', monospace;">&nbsp;&nbsp;&nbsp;&nbsp;"PROP_CATEGORY_N2_LLIBRES"&nbsp;double&nbsp;precision,</div>
<div class="t" style="left:1989.0px;top:1009.7px;font-size:26.1px;line-height:30px;font-weight:400;color:#333333;font-family:'Liberation Mono', monospace;">&nbsp;&nbsp;&nbsp;&nbsp;"PROP_CATEGORY_N2_LLIBRES&nbsp;INFANTILS"&nbsp;double&nbsp;precision,</div>
<div class="t" style="left:1989.0px;top:1046.9px;font-size:26.1px;line-height:30px;font-weight:400;color:#333333;font-family:'Liberation Mono', monospace;">&nbsp;&nbsp;&nbsp;&nbsp;"PROP_CATEGORY_N2_LLIBRES&nbsp;JUVENILS"&nbsp;double&nbsp;precision,</div>
<div class="t" style="left:1989.0px;top:1084.0px;font-size:26.1px;line-height:30px;font-weight:400;color:#333333;font-family:'Liberation Mono', monospace;">&nbsp;&nbsp;&nbsp;&nbsp;"PROP_CATEGORY_N2_LLIBRES&nbsp;DE&nbsp;TEXT"&nbsp;double&nbsp;precision,</div>
<div class="t" style="left:1989.0px;top:1121.2px;font-size:26.1px;line-height:30px;font-weight:400;color:#333333;font-family:'Liberation Mono', monospace;">&nbsp;&nbsp;&nbsp;&nbsp;"PROP_CATEGORY_N2_MES&nbsp;DELS&nbsp;JOCS&nbsp;DE&nbsp;TAULA"&nbsp;double&nbsp;precision,</div>
<div class="t" style="left:1989.0px;top:1158.3px;font-size:26.1px;line-height:30px;font-weight:400;color:#333333;font-family:'Liberation Mono', monospace;">&nbsp;&nbsp;&nbsp;&nbsp;"PROP_CATEGORY_N2_PAPERERIA&nbsp;I&nbsp;MANUALITATS"&nbsp;double&nbsp;precision,</div>
<div class="t" style="left:1989.0px;top:1195.4px;font-size:26.1px;line-height:30px;font-weight:400;color:#333333;font-family:'Liberation Mono', monospace;">&nbsp;&nbsp;&nbsp;&nbsp;"PROP_CATEGORY_N2_REVISTES"&nbsp;double&nbsp;precision,</div>
<div class="t" style="left:1989.0px;top:1232.6px;font-size:26.1px;line-height:30px;font-weight:400;color:#333333;font-family:'Liberation Mono', monospace;">&nbsp;&nbsp;&nbsp;&nbsp;"PROP_CATEGORY_N2_ROBÒTICA"&nbsp;double&nbsp;precision,</div>
<div class="t" style="left:1989.0px;top:1269.7px;font-size:26.1px;line-height:30px;font-weight:400;color:#333333;font-family:'Liberation Mono', monospace;">&nbsp;&nbsp;&nbsp;&nbsp;"PROP_CATEGORY_N2_TECNOLOGIA"&nbsp;double&nbsp;precision,</div>
<div class="t" style="left:1989.0px;top:1306.9px;font-size:26.1px;line-height:30px;font-weight:400;color:#333333;font-family:'Liberation Mono', monospace;">&nbsp;&nbsp;&nbsp;&nbsp;"PROP_CATEGORY_N2_TORNADA&nbsp;A&nbsp;L'ESCOLA"&nbsp;double&nbsp;precision,</div>
<div class="t" style="left:1989.0px;top:1344.0px;font-size:26.1px;line-height:30px;font-weight:400;color:#333333;font-family:'Liberation Mono', monospace;">&nbsp;&nbsp;&nbsp;&nbsp;"PROP_CATEGORY_N2_TÈXTIL&nbsp;ESCOLAR"&nbsp;double&nbsp;precision,</div>
<div class="t" style="left:1989.0px;top:1381.1px;font-size:26.1px;line-height:30px;font-weight:400;color:#333333;font-family:'Liberation Mono', monospace;">&nbsp;&nbsp;&nbsp;&nbsp;"PROP_CATEGORY_N2_ND"&nbsp;double&nbsp;precision</div>
<div class="t" style="left:1989.0px;top:1418.3px;font-size:26.1px;line-height:30px;font-weight:400;color:#333333;font-family:'Liberation Mono', monospace;">);</div>
<div class="r" style="left:1935px;top:1564px;width:1317px;height:199px;background:#edf5fe;border:2px solid #d5e3ef;border-radius:6px"></div>
<div class="t" style="left:1966.0px;top:1599px;font-size:39px;line-height:43px;font-weight:700;color:#424242;font-family:'Liberation Sans', sans-serif;transform:scaleX(0.9350);transform-origin:2.0px 0;">Lista de exportaciones del datamodel</div>
<div class="r" style="left:1967px;top:1667px;width:521px;height:68px;background:#2f7af0;border-radius:6px"></div>
<div class="t" style="left:1993.0px;top:1684px;font-size:29px;line-height:32px;font-weight:400;color:#fff;font-family:'Liberation Sans', sans-serif;letter-spacing:0.01px;">Ver listado en la página de procesos</div>
</body></html>
